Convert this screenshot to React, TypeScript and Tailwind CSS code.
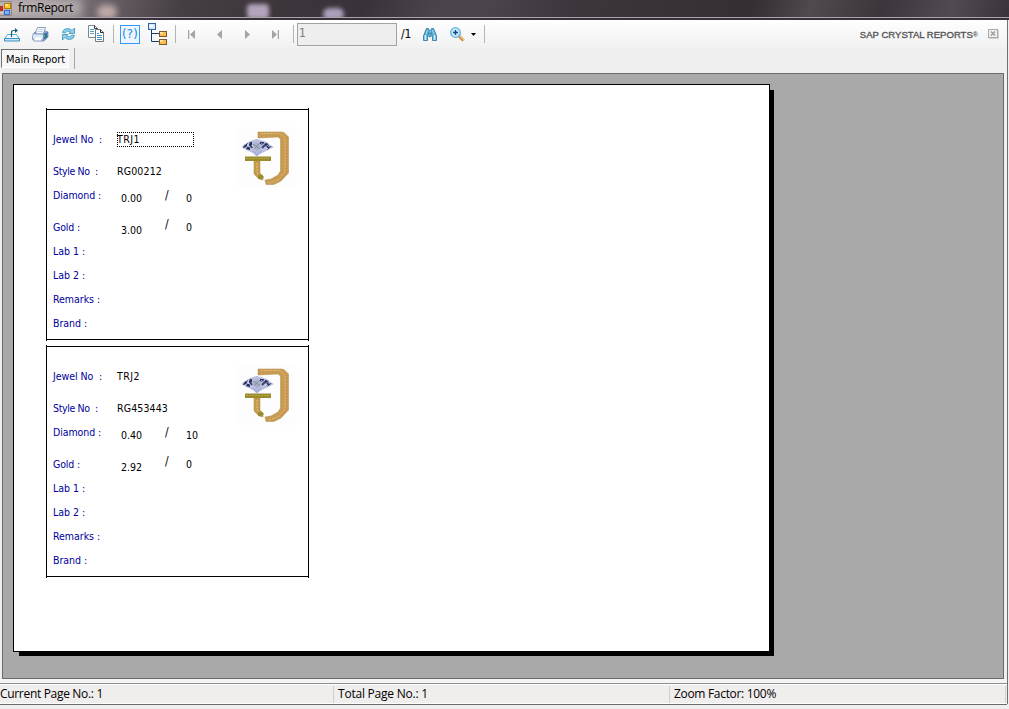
import React from 'react';

const tahoma = "font-['DejaVu_Sans_Condensed','DejaVu_Sans',sans-serif] [font-stretch:condensed]";
const segoe = "font-['Open_Sans','Noto_Sans',sans-serif]";

function Fit({ w, children, className = '' }: { w: number; children: string; className?: string }) {
  const ref = React.useRef<HTMLSpanElement>(null);
  React.useLayoutEffect(() => {
    const el = ref.current;
    if (!el) return;
    el.style.letterSpacing = '0px';
    const natural = el.getBoundingClientRect().width;
    el.style.letterSpacing = `${(w - natural) / children.length}px`;
  }, [w, children]);
  return (
    <span ref={ref} className={`inline-block shrink-0 whitespace-pre ${className}`}>
      {children}
    </span>
  );
}

function FormIcon() {
  return (
    <svg width="12" height="15" viewBox="0 0 12 15" className="shrink-0">
      <rect width="12" height="15" fill="#b9b4b2" />
      <path d="M0 14.500H11.500V0.500H0" fill="none" stroke="#8e8684" />
      <rect x="0" y="5" width="3" height="5" fill="#c62d22" />
      <rect x="4.500" y="2.500" width="6" height="5" fill="#ffc62a" stroke="#b77906" />
      <rect x="5" y="3" width="3" height="2" fill="#ffe891" />
      <rect x="4.500" y="9.500" width="5" height="4" fill="#79b1fb" stroke="#3b6fc4" />
      <path d="M0 11.500H3" stroke="#d8d4cf" />
    </svg>
  );
}

function ExportIcon() {
  return (
    <svg width="16" height="15" viewBox="0 0 16 15">
      <path d="M3.500 7.500H12.500L15 11.500H1Z" fill="#f1f9fd" stroke="#5aa9d2" />
      <path d="M0.500 11.500H15.500V14H0.500Z" fill="#c6e8f8" stroke="#3c91be" />
      <path d="M7.500 10V5.500Q7.500 3.500 9.500 3.500H13" fill="none" stroke="#225c7e" strokeWidth="1.200" />
      <path d="M11 1V6L14 3.500Z" fill="#225c7e" />
    </svg>
  );
}

function PrintIcon() {
  return (
    <svg width="17" height="16" viewBox="0 0 17 16">
      <path d="M5.500 1.500H13.500L11.500 8H3Z" fill="#f5faff" stroke="#8da0bd" />
      <path d="M6.500 3.500H11.500M5.500 5.500H10.500" stroke="#c3d0df" />
      <path d="M1 8L3 6H4L3.500 8H11L13 5L16 6V11L12 15H2L0.500 13Z" fill="#9bb2d9" stroke="#6f89b4" strokeWidth=".8" />
      <path d="M1 8.500H11V12.500H1Z" fill="#dce8fa" />
      <path d="M11.500 8L15.500 6V11L11.500 14Z" fill="#416da5" />
      <path d="M3 11.500H10L9 14.500H2Z" fill="#fff" />
      <rect x="11" y="9" width="2" height="2" fill="#35c34b" />
    </svg>
  );
}

function RefreshIcon() {
  return (
    <svg width="15" height="14" viewBox="0 0 15 14">
      <path d="M1.500 5.500Q2.500 1.500 6.500 1.500Q9 1.500 11 3.500L13.500 1V6.500H8L9.500 5Q6 2.500 4 6Z" fill="#8dd1ec" stroke="#398fb9" strokeWidth=".8" />
      <path d="M13.500 8.500Q12.500 12.500 8.500 12.500Q6 12.500 4 10.500L1.500 13V7.500H7L5.500 9Q9 11.500 11 8Z" fill="#8dd1ec" stroke="#398fb9" strokeWidth=".8" />
    </svg>
  );
}

function CopyIcon() {
  return (
    <svg width="17" height="18" viewBox="0 0 17 18">
      <path d="M0.500 0.500H6.500L9.500 3.500V12.500H0.500Z" fill="#f8fbfc" stroke="#83898c" />
      <path d="M6.500 0.500V3.500H9.500" fill="none" stroke="#34393c" />
      <path d="M2 4.500H6M2 6.500H6M2 8.500H6" stroke="#58a8ce" />
      <path d="M7.500 4.500H12.500L15.500 7.500V16.500H7.500Z" fill="#fff" stroke="#73797c" />
      <path d="M12.500 4.500V7.500H15.500" fill="none" stroke="#24292c" />
      <path d="M9 8.500H11M9 10.500H14M9 12.500H14M9 14.500H14" stroke="#3e8fbb" />
    </svg>
  );
}

function TreeIcon() {
  return (
    <svg width="19" height="22" viewBox="0 0 19 22">
      <path d="M3.500 7V18.500H11M3.500 10.500H11" fill="none" stroke="#173b6b" />
      <rect x=".5" y=".5" width="7" height="6" fill="#d6eafd" stroke="#37659b" />
      <rect x="2" y="2" width="3" height="2" fill="#fff" />
      <rect x="11.500" y="8.500" width="7" height="5" fill="#ffbb4d" stroke="#795b28" />
      <rect x="12" y="9" width="3" height="2" fill="#ffe3a0" />
      <rect x="11.500" y="16.500" width="7" height="5" fill="#ffbb4d" stroke="#795b28" />
      <rect x="12" y="17" width="3" height="2" fill="#ffe3a0" />
    </svg>
  );
}

function BinocularsIcon() {
  return (
    <svg width="14" height="13" viewBox="0 0 14 13">
      <path d="M3.500 .5H5.500L6.500 3H7.500L8.500 .5H10.500L12 4L13.500 8V12.500H9.500V8H8.500L7 9L5.500 8H4.500V12.500H.5V8L2 4Z" fill="#5aa9d1" stroke="#2776a3" strokeWidth=".8" />
      <path d="M2.500 7V12M11.500 7V12" stroke="#c7effb" strokeWidth="1.800" />
      <path d="M4.500 2L3 6M9.500 2L11 6" stroke="#a8dff3" />
      <path d="M5.500 5.500H8.500" stroke="#175b86" strokeWidth="2" />
      <path d="M7 3V7" stroke="#8bd0ed" />
    </svg>
  );
}

function ZoomIcon() {
  return (
    <svg width="15" height="15" viewBox="0 0 15 15">
      <path d="M9 9L13.500 13.500" stroke="#bf8548" strokeWidth="3" />
      <path d="M10 9L14 13" stroke="#ffc578" strokeWidth="1.500" />
      <circle cx="5.500" cy="5.500" r="4.800" fill="#c6eafe" stroke="#63b1df" strokeWidth="1.300" />
      <path d="M3 5.500H8M5.500 3V8" stroke="#164c79" strokeWidth="1.400" />
    </svg>
  );
}

const Divider = ({ className = '' }: { className?: string }) => (
  <div className={`h-[18px] w-px shrink-0 bg-[#b4b4b4] ${className}`} />
);

function Nav({ end = false, flip = false }: { end?: boolean; flip?: boolean }) {
  return (
    <svg width="7" height="9" viewBox="0 0 7 9" className={flip ? '-scale-x-100' : ''}>
      {end && <path d="M.5 0V9" stroke="#a4a4a4" strokeWidth="1.500" />}
      <path d={end ? 'M7 0V9L2 4.500Z' : 'M6 0V9L1 4.500Z'} fill="#a4a4a4" />
    </svg>
  );
}

function TitleBar() {
  return (
    <header className="relative h-5 shrink-0 overflow-hidden bg-[linear-gradient(110deg,#a59ca0_0%,#7b7277_7%,#625a60_12%,#463e45_18%,#3d353c_28%,#39323a_36%,#4a434b_43%,#4b444c_48%,#3d353c_57%,#352e35_74%,#3d353c_76%,#504950_80%,#3d353c_87%,#514a52_94%,#3a323a_100%)]">
      <div className="absolute left-[97px] top-[5px] h-[14px] w-[20px] rounded-lg bg-[#d6bdbb] opacity-80 blur-[3px]" />
      <div className="absolute left-[247px] top-[4px] h-[15px] w-[22px] rounded-sm bg-[#c0b0c9] opacity-90 blur-[2px]" />
      <div className="absolute left-[323px] top-[8px] h-[12px] w-[21px] rounded-md bg-[#b5adc9] opacity-90 blur-[2px]" />
      <div className="absolute left-[-10px] top-[-2px] h-[20px] w-[92px] bg-[#c7bfc0] opacity-70 blur-[5px]" />
      <div className="relative flex h-[17px] items-center gap-[6px]">
        <FormIcon />
        <Fit w={55} className={`${segoe} -mt-[2px] text-[12px] leading-4 text-black`}>frmReport</Fit>
      </div>
      <div className="relative h-px bg-[#aaa2a8]" />
      <div className="relative h-[2px] bg-[#373038]" />
    </header>
  );
}

function Toolbar() {
  return (
    <div className="flex h-7 shrink-0 items-center">
      <div className="ml-1 w-7"><ExportIcon /></div>
      <div className="w-[29px]"><PrintIcon /></div>
      <div className="w-[27px]"><RefreshIcon /></div>
      <div className="w-[25px]"><CopyIcon /></div>
      <Divider />
      <div className={`${tahoma} ml-[6px] flex h-[19px] w-5 items-center justify-center border border-[#3399ff] bg-[#edf6ff] text-[13px] text-[#278ad5]`}>
        <Fit w={16}>(?)</Fit>
      </div>
      <div className="ml-2 w-[27px]"><TreeIcon /></div>
      <Divider />
      <div className="ml-3 flex w-[106px] items-center gap-[21px]">
        <Nav end /><Nav /><Nav flip /><Nav end flip />
      </div>
      <Divider className="-ml-px" />
      <div className={`${tahoma} ml-[3px] h-[23px] w-[100px] border border-[#a2a2a2] bg-[#eeeeee] pl-[1px] text-[12px] leading-[19px] text-[#80777a]`}>1</div>
      <Fit w={10} className={`${tahoma} ml-1 text-[12px] text-black`}>/1</Fit>
      <div className="ml-[12px] w-[27px]"><BinocularsIcon /></div>
      <ZoomIcon />
      <svg className="ml-[6px]" width="5" height="3"><path d="M0 0H5L2.500 3Z" fill="#000" /></svg>
      <Divider className="ml-[8px]" />
      <div className="ml-auto flex items-center pr-[8px] pt-px font-['Liberation_Sans',sans-serif] text-[9.5px] text-[#555]">
        <Fit w={113} className="mt-[2px] [-webkit-text-stroke:0.35px_#555]">SAP CRYSTAL REPORTS</Fit>
        <span className="mr-[10px] mt-px text-[7px] font-bold leading-3">®</span>
        <svg width="11" height="10" viewBox="0 0 11 10" className="-mt-[2px]">
          <path d="M1 9.500H10.500V1" fill="none" stroke="#d2d2d2" />
          <rect x=".5" y=".5" width="9" height="8" fill="#eee" stroke="#aaa" />
          <path d="M3 2.500L7 6.500M7 2.500L3 6.500" stroke="#999" strokeWidth="1.200" />
        </svg>
      </div>
    </div>
  );
}

function JewelLogo() {
  return (
    <svg width="60" height="61" viewBox="237 127 60 61">
      <rect x="237" y="127" width="60" height="61" fill="#fdfdfd" />
      <path d="M258 132H281L284 132.500L288.500 137V173L281 181L274 184.500H266L265 180L271 179L278 175L280.500 171V139L278 137L258 138Z" fill="#c89b52" stroke="#b18a49" strokeWidth=".5" />
      <path d="M261 133.500H280L285 138V172L278 180L269 183" fill="none" stroke="#dfbb76" strokeWidth="1" strokeDasharray="2 1" />
      <path d="M286.500 138V173L280 180" fill="none" stroke="#cd814c" strokeWidth="1" strokeDasharray="1 2" />
      <path d="M254 161H260V173L263 176V180L259 179L254 174Z" fill="#c59a51" stroke="#ad8c43" strokeWidth=".5" />
      <path d="M257 163V173L260 177" fill="none" stroke="#e0bf78" strokeDasharray="2 1" />
      <path d="M258 175H262L264 177L262 179H258Z" fill="#978f2d" />
      <rect x="245" y="156.500" width="26" height="4.500" fill="#998c2b" />
      <path d="M246 158.500H270" stroke="#b7a649" strokeDasharray="2 1" />
      <path d="M241.500 147L245 144L250 141L257 139L267 142L270 145L274 147L268 150L260 154L256.500 156L253 153L246 150Z" fill="#b9bfdc" />
      <path d="M244 145L248 143L247 147L243 148ZM249 142L252 142L252 145L249 146ZM247 147L250 147V150L246 149ZM260 142L264 142L263 145L260 144ZM265 143L269 144L268 148L264 146ZM268 147L272 146L267 150Z" fill="#263061" />
      <path d="M242 147L247 143M247 144L252 150M250 142L245 149M261 143L268 149M269 144L262 150" stroke="#d8def3" strokeWidth=".7" />
      <path d="M252 148L250 145M262 148L265 145" stroke="#3b426f" strokeWidth="2" />
      <path d="M253 145L257 142L261 146L257 152Z" fill="#a9b1c6" />
      <path d="M253 151L257 155L261 151" fill="none" stroke="#aaaee6" strokeWidth="2" />
      <path d="M253 144L260 149M260 143L254 149" stroke="#7c8297" strokeWidth=".8" />
    </svg>
  );
}

type Entry = { no: string; style: string; diamond: string; pieces: string; gold: string; selected?: boolean };

const entries: Entry[] = [
  { no: 'TRJ1', style: 'RG00212', diamond: '0.00', pieces: '0', gold: '3.00', selected: true },
  { no: 'TRJ2', style: 'RG453443', diamond: '0.40', pieces: '10', gold: '2.92' },
];

function Row({ label, w, children, className = '' }: { label: string; w: number; children?: React.ReactNode; className?: string }) {
  const colon = label.endsWith(' :');
  return (
    <div className={`flex h-4 items-start ${className}`}>
      <div className="flex w-16 shrink-0 text-[#00009c]">
        <Fit w={colon ? w - 4 : w}>{colon ? label.slice(0, -1) : label}</Fit>
        {colon && <span>:</span>}
      </div>
      {children}
    </div>
  );
}

function Card({ entry }: { entry: Entry }) {
  return (
    <section className="h-[233px] w-[263px] border-x border-black py-px">
      <div className={`${tahoma} flex h-[231px] justify-between border-y border-black pl-[6px] pr-[11px] text-[10.5px] leading-4 text-black`}>
        <div className="flex flex-col pt-[21px]">
          <Row label="Jewel No  :" w={50}>
            <div className={entry.selected ? 'mt-px h-[15px] w-[77px] border border-dotted border-black' : 'mt-px h-[15px] w-[77px] border border-transparent'}>
              <Fit w={23} className="-ml-px -mt-px align-top leading-[15px]">{entry.no}</Fit>
            </div>
          </Row>
          <Row label="Style No  :" w={46} className="mt-4"><Fit w={entry.style.length === 7 ? 45 : 51}>{entry.style}</Fit></Row>
          <Row label="Diamond :" w={49} className="mt-2">
            <div className="w-[48px] pl-1 pt-[3px]"><Fit w={21}>{entry.diamond}</Fit></div>
            <div className="w-[21px] text-[12px]">/</div>
            <div className="pt-[3px]"><Fit w={entry.pieces.length * 6}>{entry.pieces}</Fit></div>
          </Row>
          <Row label="Gold :" w={28} className="mt-4">
            <div className="w-[48px] pl-1 pt-[3px]"><Fit w={21}>{entry.gold}</Fit></div>
            <div className="-mt-[3px] w-[21px] text-[12px]">/</div>
            <Fit w={6}>0</Fit>
          </Row>
          <Row label="Lab 1 :" w={33} className="mt-2" />
          <Row label="Lab 2 :" w={33} className="mt-2" />
          <Row label="Remarks :" w={48} className="mt-2" />
          <Row label="Brand :" w={35} className="mt-2" />
        </div>
        <div className="pt-[17px]"><JewelLogo /></div>
      </div>
    </section>
  );
}

function StatusBar() {
  return (
    <footer className={`${segoe} flex h-[22px] shrink-0 items-center border-y border-t-[#8e8e8e] border-b-[#6c6c6c] bg-[#f0eded] text-[12px] leading-4 text-black shadow-[inset_0_1px_0_#fff,inset_0_-1px_0_#fff]`}>
      <div className="flex h-[17px] w-[334px] items-center border-r border-[#d2cfcf]"><Fit w={103}>Current Page No.: 1</Fit></div>
      <div className="flex h-[17px] w-[336px] items-center border-r border-[#d2cfcf] pl-1"><Fit w={90}>Total Page No.: 1</Fit></div>
      <div className="flex h-[17px] w-[336px] items-center border-r border-[#d2cfcf] pl-1"><Fit w={102}>Zoom Factor: 100%</Fit></div>
    </footer>
  );
}

export default function App() {
  return (
    <div className="flex h-[709px] w-[1009px] flex-col overflow-hidden bg-[#efefef]">
      <TitleBar />
      <div className="flex h-[684px] shrink-0 flex-col border-r border-[#707070] bg-[linear-gradient(#fff_0px,#f8f8f8_14px,#efefef_32px)] mr-px">
        <Toolbar />
        <div className="flex h-[25px] shrink-0">
          <div className={`${tahoma} mt-px ml-px h-[19px] w-[68px] border-l border-t border-r border-b border-l-[#707070] border-t-[#707070] border-r-white border-b-white bg-[repeating-conic-gradient(#fff_0_25%,#f0f0f0_0_50%)] bg-[length:2px_2px] pl-[4px] text-[11px] leading-[19px] text-black`}>
            <Fit w={59}>Main Report</Fit>
          </div>
          <div className="ml-[5px] h-[21px] w-px bg-[#a6a6a6]" />
        </div>
        <main className="ml-[2px] h-[606px] w-[1002px] shrink-0 border border-[#6b6b6b] bg-[#a9a9a9] pl-[10px] pt-[10px]">
          <div className="flex h-[568px] w-[757px] flex-col gap-[4px] border border-black bg-white pl-8 pt-[23px] shadow-[5px_5px_0_-1px_#000]">
            {entries.map((entry) => <Card key={entry.no} entry={entry} />)}
          </div>
        </main>
        <div className="h-1 shrink-0 bg-[#f5f5f5]" />
        <StatusBar />
      </div>
    </div>
  );
}
